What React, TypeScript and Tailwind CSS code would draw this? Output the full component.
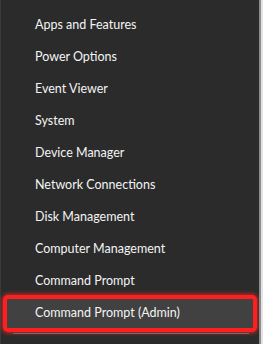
import React from "react";

// Win+X power user menu
const items: string[] = [
  "Apps and Features",
  "Power Options",
  "Event Viewer",
  "System",
  "Device Manager",
  "Network Connections",
  "Disk Management",
  "Computer Management",
  "Command Prompt",
];

const App: React.FC = () => {
  return (
    <div
      className="flex h-[344px] w-[263px] overflow-hidden bg-[#2b2b2b] text-white"
      style={{ fontFamily: 'Lato, "Noto Sans", sans-serif' }}
    >
      <div className="flex w-[259px] flex-col border-l border-[#3a3a3a] pt-[9px]">
        {items.map((label) => (
          <div key={label} className="flex h-8 items-center pl-[34px] text-[12.5px] text-[#f4f4f4]">
            {label}
          </div>
        ))}

        {/* Highlighted item */}
        <div className="-mt-[2px] ml-[2px] mr-[2px] flex h-[37px] items-center rounded-[5px] border-4 border-[#ff1f1f] bg-[#414141] pb-px pl-[28px] text-[12.5px] text-[#f4f4f4] shadow-[0_0_4px_1px_rgba(255,40,40,0.75)]">
          Command Prompt (Admin)
        </div>

        <div className="mx-[12px] mt-px h-px w-[236px] bg-[#6e6e6e]" />
      </div>

      {/* Edge of the window behind */}
      <div className="w-[2px] bg-[#8c8c8c]" />
      <div className="w-[2px] bg-[#e4e4e4]" />
    </div>
  );
};

export default App;
